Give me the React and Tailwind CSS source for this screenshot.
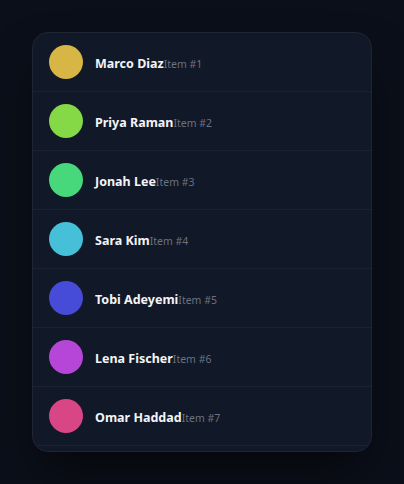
import React from "react";

const people = [
  { name: "Marco Diaz", hue: 46 },
  { name: "Priya Raman", hue: 94 },
  { name: "Jonah Lee", hue: 142 },
  { name: "Sara Kim", hue: 190 },
  { name: "Tobi Adeyemi", hue: 238 },
  { name: "Lena Fischer", hue: 286 },
  { name: "Omar Haddad", hue: 334 },
];

export default function App() {
  return (
    <div className="min-h-screen bg-[#0b0f19] p-8 font-['Noto_Sans',sans-serif]">
      <div className="h-[420px] w-[340px] overflow-hidden rounded-2xl border border-[#1f2533] bg-[#111827] shadow-2xl shadow-black/60">
        <ul>
          {people.map((p, i) => (
            <li
              key={p.name}
              className="flex items-center gap-3 border-b border-[#1c2230] px-4 py-3"
            >
              <div
                className="h-[34px] w-[34px] shrink-0 rounded-full"
                style={{ background: `hsl(${p.hue}, 65%, 56%)` }}
              />
              <div className="flex items-baseline pt-[5px]">
                <span className="text-[12.5px] font-bold text-[#f3f4f6]">{p.name}</span>
                <span className="text-[10.5px] text-[#6b7280]">Item #{i + 1}</span>
              </div>
            </li>
          ))}
        </ul>
      </div>
    </div>
  );
}
